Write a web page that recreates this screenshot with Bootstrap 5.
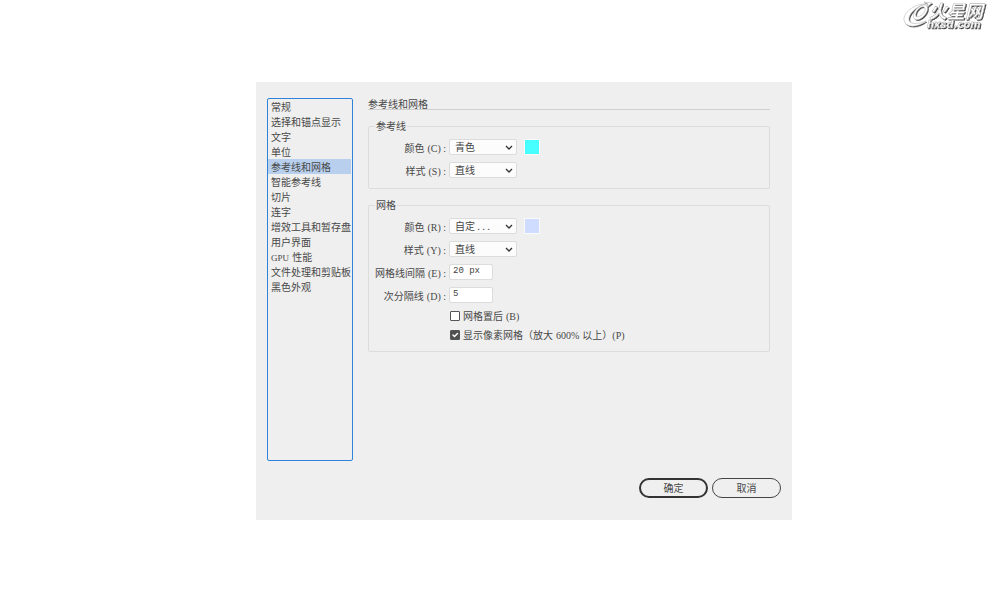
<!DOCTYPE html>
<html lang="zh-CN">
<head>
<meta charset="utf-8">
<meta name="viewport" content="width=device-width, initial-scale=1">
<title>首选项 - 参考线和网格</title>
<link href="https://cdn.jsdelivr.net/npm/bootstrap@5.3.0/dist/css/bootstrap.min.css" rel="stylesheet">
<style>
body { background: #fff; color: #484848; font: 10px/12px "Noto Sans CJK SC", sans-serif; }
.latin { font-family: "Liberation Serif", serif; font-size: 10px; line-height: 10px; margin-left: 3px; }
.latin.number { margin-right: 3px; }
.latin.narrow { font-size: 9px; margin: 0 1px 0 0; }
.page-head { height: 82px; padding-right: 8px; }
.dialog { background: #efefef; width: 54%; max-width: 536px; margin-left: 25.6%; padding: 16px 11px 22px; }
.panes { gap: 15px; }
.categories { width: 86px; min-height: 363px; border: 1px solid #2f83d8; border-radius: 2px; padding: 0 1px 0 0; }
.categories .list-group-item { border: 0; border-radius: 0; padding: 0 0 0 3px; height: 15px; line-height: 15px; background: none; color: inherit; white-space: nowrap; }
.categories .list-group-item.active { background: #b8d0ee; margin: 0; }
.settings { padding-right: 11px; }
.settings h1 { font-size: 10px; line-height: 11px; font-weight: 400; border-bottom: 1px solid #cfcfcf; margin: 0 0 10px; }
.group { border: 1px solid #dcdcdc; border-radius: 2px; padding: 7px 6px 10px; margin: 0 0 10px; }
.group legend { float: none; width: auto; font-size: 10px; line-height: 12px; margin: 0; padding: 0 1px; }
.rows { gap: 7px; }
.field { gap: 3px; height: 16px; }
.field > label { width: 71px; padding-top: 1px; text-align: right; white-space: nowrap; }
.field .form-select, .field .form-control { height: 16px; min-height: 0; font-size: 10px; line-height: 14px; color: #444; border: 1px solid #dcdcdc; border-radius: 2px; background-color: #fcfcfc; }
.field .form-select { width: 68px; padding: 0 16px 0 5px; background-position: right 3px center; background-size: 8px 8px; background-image: url("data:image/svg+xml,%3Csvg xmlns='http://www.w3.org/2000/svg' viewBox='0 0 8 8'%3E%3Cpath d='M1 3l3 3 3-3' fill='none' stroke='%23333' stroke-width='1.3'/%3E%3C/svg%3E"); }
.field .form-control { width: 44px; padding: 0 3px 2px; font-family: "Liberation Mono", monospace; font-size: 9px; background-color: #fff; }
.swatch { width: 16px; height: 16px; border: 1px solid #fafafa; margin-left: 4px; padding: 0; }
.cyan { background: #48ffff; }
.lavender { background: #cfdcff; }
.tick { gap: 3px; height: 12px; padding-left: 75px; white-space: nowrap; }
.tick .form-check-input { width: 10px; height: 10px; margin: 0; border: 1px solid #555; border-radius: 1px; float: none; flex: none; background-color: #fff; }
.tick .form-check-input:checked { background-color: #505050; background-size: 10px; }
.actions { gap: 4px; margin-top: 17px; }
.actions .btn { width: 69px; height: 20px; font-size: 10px; line-height: 12px; padding: 0; border: 1px solid #444; border-radius: 10px; color: #484848; }
.actions .btn.default { border-width: 2px; border-color: #333; }
</style>
</head>
<body>
<header class="page-head d-flex justify-content-end">
  <a href="#" aria-label="火星网 hxsd.com">
    <svg width="92" height="32" viewBox="0 0 92 32">
      <defs><filter id="shade" x="-10%" y="-10%" width="130%" height="130%"><feDropShadow dx="1" dy="1" stdDeviation=".6" flood-color="#222" flood-opacity=".85"/></filter></defs>
      <g filter="url(#shade)" fill="#fff" stroke="#999" stroke-width=".4">
        <path fill-rule="evenodd" d="M25 4C14 4 3 13 4 20c1 8 14 8 22 1-7 3-16 4-17-1C8 14 16 7 25 4z"/>
        <path fill-rule="evenodd" d="M26 5c4 3 0 11-6 14-5 2-8-1-6-6 2-5 8-9 12-8zm-2 2c-3-1-7 3-8 6-1 4 1 5 4 3 4-2 7-7 4-9z"/>
        <path d="M24 2l8 1-5 4 1-3z"/>
        <text x="29" y="18" font-family="Noto Sans CJK SC, sans-serif" font-size="18" font-weight="700" font-style="italic">火星网</text>
        <text x="27" y="28" font-family="DejaVu Sans, sans-serif" font-size="10" font-weight="700" font-style="italic">hxsd.com</text>
      </g>
    </svg>
  </a>
</header>
<main class="dialog">
  <div class="panes d-flex">
    <nav class="categories list-group flex-shrink-0" aria-label="首选项类别">
      <a href="#" class="list-group-item">常规</a>
      <a href="#" class="list-group-item">选择和锚点显示</a>
      <a href="#" class="list-group-item">文字</a>
      <a href="#" class="list-group-item">单位</a>
      <a href="#" class="list-group-item active" aria-current="true">参考线和网格</a>
      <a href="#" class="list-group-item">智能参考线</a>
      <a href="#" class="list-group-item">切片</a>
      <a href="#" class="list-group-item">连字</a>
      <a href="#" class="list-group-item">增效工具和暂存盘</a>
      <a href="#" class="list-group-item">用户界面</a>
      <a href="#" class="list-group-item"><span class="latin narrow">GPU</span> 性能</a>
      <a href="#" class="list-group-item">文件处理和剪贴板</a>
      <a href="#" class="list-group-item">黑色外观</a>
    </nav>
    <section class="settings flex-grow-1">
      <h1>参考线和网格</h1>
      <fieldset class="group">
        <legend>参考线</legend>
        <div class="rows d-flex flex-column">
          <div class="field d-flex align-items-center">
            <label for="guideColor">颜色<span class="latin">(C) :</span></label>
            <select id="guideColor" class="form-select"><option>青色</option></select>
            <button type="button" class="swatch cyan" aria-label="参考线颜色"></button>
          </div>
          <div class="field d-flex align-items-center">
            <label for="guideStyle">样式<span class="latin">(S) :</span></label>
            <select id="guideStyle" class="form-select"><option>直线</option></select>
          </div>
        </div>
      </fieldset>
      <fieldset class="group">
        <legend>网格</legend>
        <div class="rows d-flex flex-column">
          <div class="field d-flex align-items-center">
            <label for="gridColor">颜色<span class="latin">(R) :</span></label>
            <select id="gridColor" class="form-select"><option>自定 . . .</option></select>
            <button type="button" class="swatch lavender" aria-label="网格颜色"></button>
          </div>
          <div class="field d-flex align-items-center">
            <label for="gridStyle">样式<span class="latin">(Y) :</span></label>
            <select id="gridStyle" class="form-select"><option>直线</option></select>
          </div>
          <div class="field d-flex align-items-center">
            <label for="gridEvery">网格线间隔<span class="latin">(E) :</span></label>
            <input id="gridEvery" class="form-control" type="text" value="20 px">
          </div>
          <div class="field d-flex align-items-center">
            <label for="subdivisions">次分隔线<span class="latin">(D) :</span></label>
            <input id="subdivisions" class="form-control" type="text" value="5">
          </div>
          <div class="tick d-flex align-items-center">
            <input id="gridBack" class="form-check-input" type="checkbox">
            <label for="gridBack">网格置后<span class="latin">(B)</span></label>
          </div>
          <div class="tick d-flex align-items-center">
            <input id="pixelGrid" class="form-check-input" type="checkbox" checked>
            <label for="pixelGrid">显示像素网格（放大<span class="latin number">600%</span>以上）<span class="latin m-0">(P)</span></label>
          </div>
        </div>
      </fieldset>
    </section>
  </div>
  <div class="actions d-flex justify-content-end">
    <button type="button" class="btn default">确定</button>
    <button type="button" class="btn">取消</button>
  </div>
</main>
</body>
</html>
